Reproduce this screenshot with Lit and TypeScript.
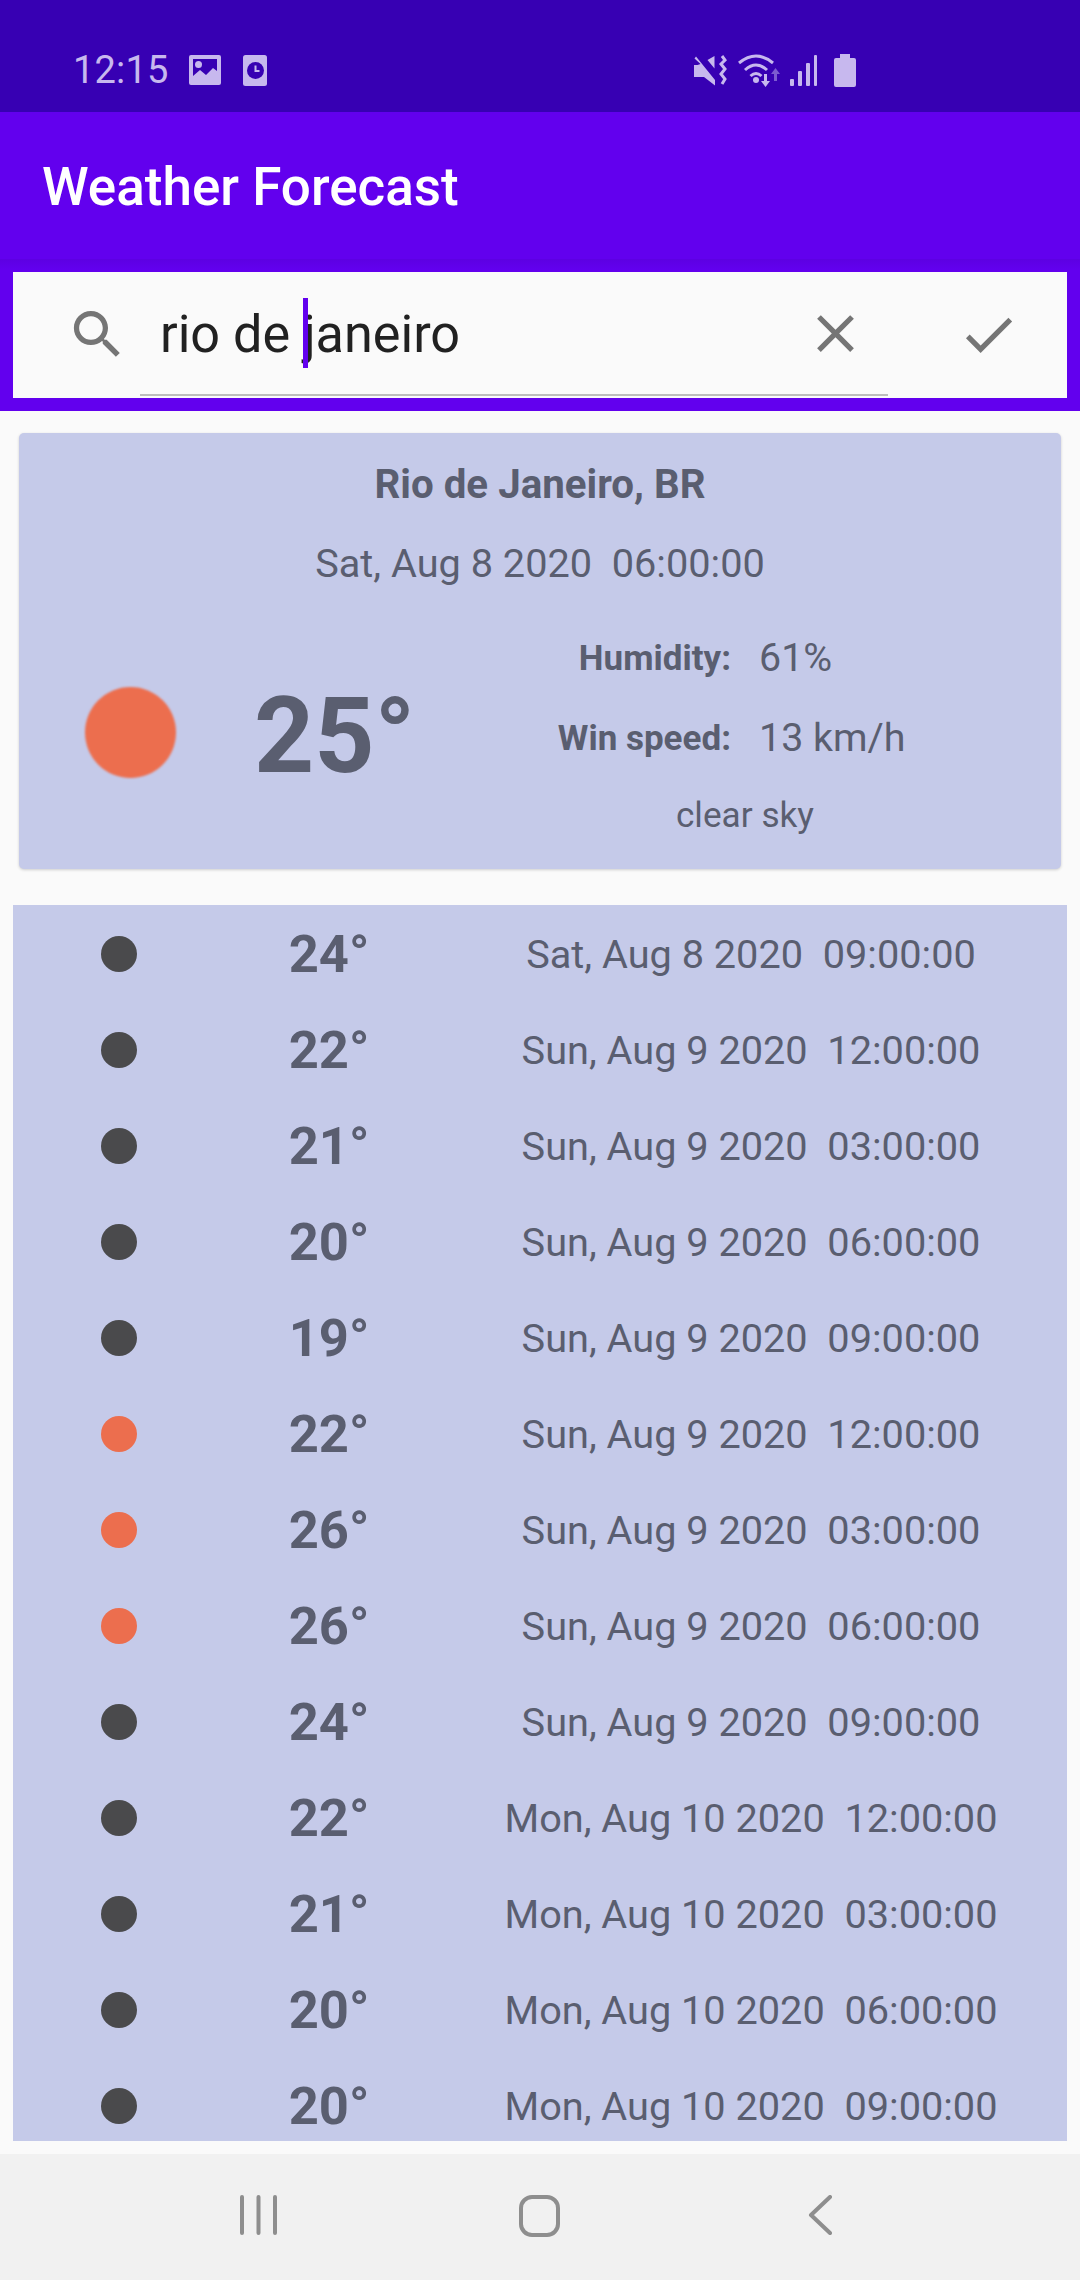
import { LitElement, html, css, svg } from 'lit';
import { customElement } from 'lit/decorators.js';

interface Row {
  temp: number;
  date: string;
  time: string;
  warm?: boolean;
}

const rows: Row[] = [
  { temp: 24, date: 'Sat, Aug 8 2020', time: '09:00:00' },
  { temp: 22, date: 'Sun, Aug 9 2020', time: '12:00:00' },
  { temp: 21, date: 'Sun, Aug 9 2020', time: '03:00:00' },
  { temp: 20, date: 'Sun, Aug 9 2020', time: '06:00:00' },
  { temp: 19, date: 'Sun, Aug 9 2020', time: '09:00:00' },
  { temp: 22, date: 'Sun, Aug 9 2020', time: '12:00:00', warm: true },
  { temp: 26, date: 'Sun, Aug 9 2020', time: '03:00:00', warm: true },
  { temp: 26, date: 'Sun, Aug 9 2020', time: '06:00:00', warm: true },
  { temp: 24, date: 'Sun, Aug 9 2020', time: '09:00:00' },
  { temp: 22, date: 'Mon, Aug 10 2020', time: '12:00:00' },
  { temp: 21, date: 'Mon, Aug 10 2020', time: '03:00:00' },
  { temp: 20, date: 'Mon, Aug 10 2020', time: '06:00:00' },
  { temp: 20, date: 'Mon, Aug 10 2020', time: '09:00:00' },
];

const glyph = (d: string) => html`<svg class="glyph" viewBox="0 0 24 24">${svg`<path d=${d} fill="#757575"></path>`}</svg>`;

@customElement('app-root')
export class AppRoot extends LitElement {
  static styles = css`
    :host {
      display: block;
      width: 1080px;
      height: 2280px;
      font-family: Roboto, 'Liberation Sans', sans-serif;
      background: #fafafa;
      overflow: hidden;
    }
    .page {
      display: flex;
      flex-direction: column;
      height: 2280px;
    }
    .status {
      height: 112px;
      flex: none;
      background: #3700b3;
      color: #c7b8ee;
      display: flex;
      align-items: center;
      box-sizing: border-box;
      padding: 28px 0 0 73px;
      font-size: 38px;
      letter-spacing: 0.2px;
    }
    .status svg {
      display: block;
      flex: none;
    }
    .status .time {
      width: 116px;
      line-height: 44px;
    }
    .ic-clock {
      margin-left: 22px;
    }
    .ic-mute {
      margin-left: 427px;
    }
    .ic-wifi {
      margin-left: 11px;
    }
    .ic-signal {
      margin-left: 10px;
    }
    .ic-batt {
      margin-left: 17px;
    }
    .appbar {
      height: 147px;
      flex: none;
      background: #6200ee;
      color: #fff;
      font-size: 53px;
      font-weight: 500;
      display: flex;
      align-items: center;
      padding: 2px 0 0 42px;
      box-sizing: border-box;
    }
    .searchwrap {
      flex: none;
      height: 152px;
      box-sizing: border-box;
      padding: 13px;
      background: linear-gradient(#5d00e2, #6200ee 10px);
    }
    .search {
      height: 126px;
      box-sizing: border-box;
      background: #fafafa;
      display: flex;
      padding: 0 0 2px 53px;
    }
    .glyph {
      width: 63px;
      height: 63px;
      display: block;
      flex: none;
    }
    .search > .glyph {
      align-self: center;
    }
    .plate {
      width: 748px;
      margin-left: 11px;
      border-bottom: 2px solid #bdbdbd;
      display: flex;
      align-items: center;
      padding-left: 20px;
      box-sizing: border-box;
    }
    .query {
      position: relative;
      font-size: 52.2px;
      line-height: 64px;
      color: #212121;
      flex: 1;
      padding-top: 4px;
    }
    .cursor {
      position: absolute;
      left: 143px;
      top: -1px;
      width: 5px;
      height: 70px;
      background: #6200ee;
    }
    .plate .glyph {
      margin-right: 21px;
    }
    .check {
      margin-left: 69px;
      align-self: center;
    }
    .card {
      flex: none;
      margin: 22px 19px 0;
      height: 436px;
      box-sizing: border-box;
      padding-top: 30px;
      background: #c5cae9;
      border-radius: 5px;
      box-shadow: 0 1px 3px rgba(0, 0, 0, 0.18);
      color: #5a5e70;
      text-align: center;
    }
    .city {
      font-size: 40.3px;
      font-weight: 700;
      line-height: 44px;
    }
    .when {
      margin-top: 35px;
      font-size: 39.7px;
      line-height: 44px;
      white-space: pre;
    }
    .body {
      margin-top: 50px;
      display: flex;
      align-items: center;
      padding: 0 51px 0 66px;
    }
    .sun {
      width: 91px;
      height: 91px;
      border-radius: 50%;
      background: #ec6e4e;
      filter: blur(1px);
      flex: none;
      margin-bottom: 9px;
    }
    .big {
      margin-left: 78px;
      font-size: 105px;
      font-weight: 700;
      line-height: 120px;
      flex: none;
    }
    .details {
      margin-left: auto;
      width: 530px;
      display: grid;
      grid-template-columns: 1fr 1fr;
      column-gap: 28px;
      row-gap: 35px;
      font-size: 39.4px;
      line-height: 44px;
      text-align: left;
    }
    .details b {
      font-size: 35px;
      font-weight: 700;
      text-align: right;
      padding-top: 1px;
    }
    .sky {
      grid-column: 1 / 3;
      text-align: center;
      font-size: 35.2px;
      margin-top: -3px;
    }
    .list {
      flex: none;
      margin: 36px 13px 0;
      height: 1236px;
      box-sizing: border-box;
      padding-top: 1px;
      background: #c5cae9;
      overflow: hidden;
      color: #5a5e70;
    }
    .row {
      height: 96px;
      display: grid;
      grid-template-columns: 212px 208px 1fr;
      align-items: center;
      text-align: center;
    }
    .dot {
      width: 36px;
      height: 36px;
      border-radius: 50%;
      background: #4a4a4c;
      justify-self: center;
    }
    .dot.warm {
      background: #ec6e4e;
    }
    .temp {
      font-size: 52.5px;
      font-weight: 700;
    }
    .date {
      font-size: 39.7px;
      white-space: pre;
      padding-left: 2px;
    }
    .nav {
      margin-top: 13px;
      flex: 1;
      background: #f1f1f1;
      display: grid;
      grid-template-columns: 240px 37px 242px 41px 248px 25px;
      padding-top: 41px;
      box-sizing: border-box;
    }
    .nav svg {
      display: block;
    }
  `;

  render() {
    return html`
      <div class="page">
        <div class="status">
          <span class="time">12:15</span>
          <svg width="32" height="30" viewBox="0 0 32 30">
            <path fill="#c7b8ee" fill-rule="evenodd" d="M2 0h28a2 2 0 0 1 2 2v26a2 2 0 0 1-2 2H2a2 2 0 0 1-2-2V2a2 2 0 0 1 2-2zM4 4v17l7-6 6 5 7-7 4 3V4z"></path>
            <circle cx="9.5" cy="9.5" r="3.5" fill="#c7b8ee"></circle>
          </svg>
          <svg class="ic-clock" width="24" height="31" viewBox="0 0 24 31">
            <rect width="24" height="31" rx="2.5" fill="#c7b8ee"></rect>
            <circle cx="12.5" cy="15.5" r="8.5" fill="#3700b3"></circle>
            <path d="M12.5 10.5v5.5h4" fill="none" stroke="#c7b8ee" stroke-width="2"></path>
          </svg>
          <svg class="ic-mute" width="33" height="31" viewBox="0 0 33 31">
            <path fill="#c7b8ee" d="M2 1.500 21 25v5.500L10 22H0V10h3.500l3-1L0.500 3.500zM20.500 1v12.500L13.500 5z"></path>
            <path fill="none" stroke="#c7b8ee" stroke-width="3" d="M28 1l3 4-4 4 4 5-4 5 4 5-3 5"></path>
          </svg>
          <svg class="ic-wifi" width="42" height="33" viewBox="0 0 42 33">
            <path fill="none" stroke="#c7b8ee" stroke-width="3" d="M1 9Q18-5 35 9M7 16Q18 6 29 16M12.500 22Q18 17 23.500 22"></path>
            <circle cx="18" cy="26" r="3" fill="#c7b8ee"></circle>
            <path fill="#c7b8ee" d="M26 20h3v7h3l-4.500 6-4.500-6h3z"></path>
            <path fill="#7d5bd0" d="M36 27h3v-7h3l-4.500-6-4.500 6h3z"></path>
          </svg>
          <svg class="ic-signal" width="27" height="31" viewBox="0 0 27 31">
            <rect x="0" y="24" width="4" height="7" rx="1" fill="#c7b8ee"></rect>
            <rect x="8" y="16" width="4" height="15" rx="1" fill="#c7b8ee"></rect>
            <rect x="16" y="8" width="4" height="23" rx="1" fill="#c7b8ee"></rect>
            <rect x="24" y="0" width="3" height="31" rx="1" fill="#c7b8ee"></rect>
          </svg>
          <svg class="ic-batt" width="22" height="33" viewBox="0 0 22 33">
            <path fill="#c7b8ee" d="M6 0h10v4h4a2 2 0 0 1 2 2v25a2 2 0 0 1-2 2H2a2 2 0 0 1-2-2V6a2 2 0 0 1 2-2h4z"></path>
          </svg>
        </div>
        <div class="appbar">Weather Forecast</div>
        <div class="searchwrap">
          <div class="search">
            ${glyph('M15.5 14h-.79l-.28-.27C15.41 12.59 16 11.11 16 9.5 16 5.91 13.09 3 9.5 3S3 5.91 3 9.5 5.91 16 9.5 16c1.61 0 3.09-.59 4.23-1.57l.27.28v.79l5 4.99L20.49 19l-4.99-5zm-6 0C7.01 14 5 11.99 5 9.5S7.01 5 9.5 5 14 7.01 14 9.5 11.99 14 9.5 14z')}
            <div class="plate">
              <div class="query">rio de janeiro<span class="cursor"></span></div>
              ${glyph('M19 6.41L17.59 5 12 10.59 6.41 5 5 6.41 10.59 12 5 17.59 6.41 19 12 13.41 17.59 19 19 17.59 13.41 12z')}
            </div>
            <div class="check">${glyph('M9 16.17L4.83 12l-1.41 1.41L9 19 21 7l-1.41-1.41z')}</div>
          </div>
        </div>
        <div class="card">
          <div class="city">Rio de Janeiro, BR</div>
          <div class="when">Sat, Aug 8 2020  06:00:00</div>
          <div class="body">
            <div class="sun"></div>
            <div class="big">25°</div>
            <div class="details">
              <b>Humidity:</b><span>61%</span>
              <b>Win speed:</b><span>13 km/h</span>
              <div class="sky">clear sky</div>
            </div>
          </div>
        </div>
        <div class="list">
          ${rows.map(
            (r) => html`
              <div class="row">
                <div class="dot ${r.warm ? 'warm' : ''}"></div>
                <div class="temp">${r.temp}°</div>
                <div class="date">${r.date}  ${r.time}</div>
              </div>
            `
          )}
        </div>
        <div class="nav">
          <span></span>
          <svg width="37" height="40" viewBox="0 0 37 40">
            <path d="M2 2v36M18.500 2v36M35 2v36" stroke="#8e8e8e" stroke-width="4" stroke-linecap="round" fill="none"></path>
          </svg>
          <span></span>
          <svg width="41" height="42" viewBox="0 0 41 42">
            <rect x="2" y="2" width="37" height="38" rx="11" stroke="#8e8e8e" stroke-width="4" fill="none"></rect>
          </svg>
          <span></span>
          <svg width="25" height="40" viewBox="0 0 25 40">
            <path d="M22 2 3 20l19 18" stroke="#8e8e8e" stroke-width="4" stroke-linecap="round" stroke-linejoin="round" fill="none"></path>
          </svg>
        </div>
      </div>
    `;
  }
}
